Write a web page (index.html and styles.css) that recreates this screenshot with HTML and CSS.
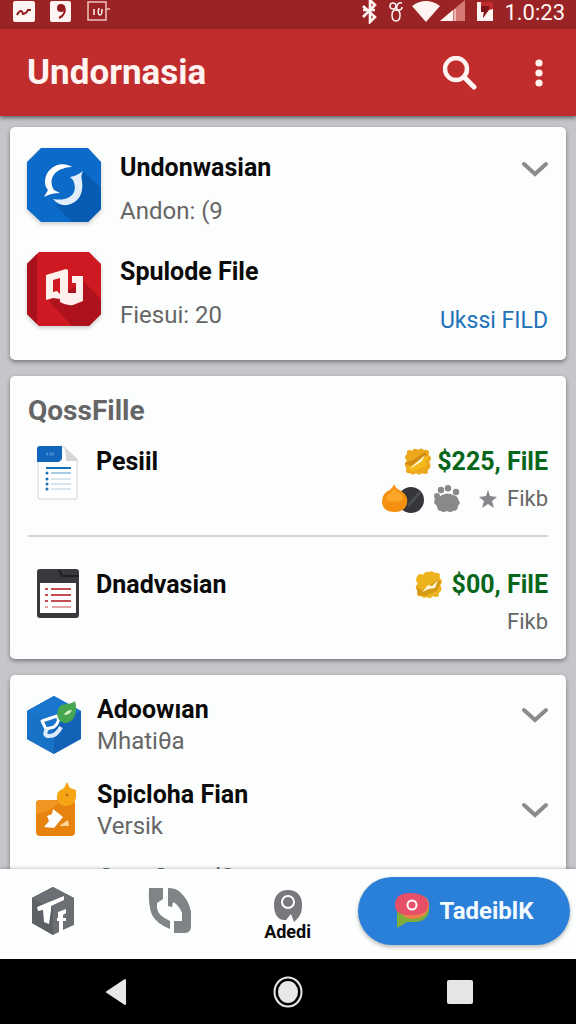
FILE: index.html
```
<!DOCTYPE html>
<html lang="en">
<head>
  <meta charset="UTF-8" />
  <meta name="viewport" content="width=device-width, initial-scale=1.0" />
  <title>Undornasia</title>
  <link rel="stylesheet" href="styles.css">
</head>
<body>
  <div class="status-bar">
    <div class="status-left">
      <svg width="22" height="22" viewBox="0 0 22 22"><rect width="22" height="21" y="1" rx="2" fill="#fff4f1"/><path d="M4 15q2-4 4-4 1 0 2 3 4-1 5-4h3" fill="none" stroke="#8c1c20" stroke-width="2"/></svg>
      <svg width="22" height="22" viewBox="0 0 22 22"><rect width="21" height="21" y="1" rx="2" fill="#fff4f1"/><circle cx="11" cy="8" r="4" fill="#941c20"/><path d="M14 6q3 8-5 12" fill="none" stroke="#941c20" stroke-width="2"/></svg>
      <svg width="24" height="22" viewBox="0 0 24 22"><path d="M19 8V2H1v18h18V9M18 9h5" fill="none" stroke="#f4c4bd" stroke-width="1.500"/><path d="M7 9v6M12 8q-2 7 1 7 2 0 2-6" fill="none" stroke="#fff4f1" stroke-width="1.500"/></svg>
    </div>
    <div class="status-right">
      <svg width="16" height="24" viewBox="0 0 16 24"><path d="M1 6l12 11-5 5V0l5 5L1 17M1 10h12" fill="none" stroke="#fff4f1" stroke-width="2.600"/></svg>
      <svg class="status-link" width="16" height="22" viewBox="0 0 16 22"><g fill="none" stroke="#fff4f1" stroke-width="1.500"><circle cx="5" cy="6" r="3"/><path d="M14 3q-4-1-5 3t2 4q3 0 3-3M8 10q-4 0-4 5 0 6 4 6t4-6q0-5-4-5z"/></g></svg>
      <svg width="28" height="23" viewBox="0 0 28 23"><path d="M0 6Q14-4 28 6L14 22z" fill="#fff4f1"/></svg>
      <svg width="26" height="22" viewBox="0 0 26 22"><path d="M0 21L25 0v21z" fill="#d67874"/><path d="M0 21L13 10v11z" fill="#fff4f1"/><path d="M15 9v12" stroke="#fff4f1"/></svg>
      <svg class="status-battery" width="16" height="22" viewBox="0 0 16 22"><path d="M0 2h16v19H0z" fill="#fff4f1"/><path d="M4 2h12v7l-4 1-6 8 1-6H4z" fill="#c02c2d"/><path d="M4 6h8v3l-6 9 1-6H4z" fill="#7c1518"/></svg>
      <span class="time">1.0:23</span>
    </div>
  </div>

  <header class="app-bar">
    <h1>Undornasia</h1>
    <button class="icon-button" type="button" aria-label="Search">
      <svg width="34" height="34" viewBox="0 0 34 34"><circle cx="13" cy="13" r="11" fill="none" stroke="#fff4f1" stroke-width="4.500"/><path d="M21 21l10 10" stroke="#fff4f1" stroke-width="5" stroke-linecap="round"/></svg>
    </button>
    <button class="icon-button" type="button" aria-label="More options">
      <svg width="8" height="28" viewBox="0 0 8 28"><g fill="#fff4f1"><circle cx="4" cy="4" r="3.600"/><circle cx="4" cy="14" r="3.600"/><circle cx="4" cy="24" r="3.600"/></g></svg>
    </button>
  </header>

  <main class="content">
    <section class="card apps">
      <div class="app-row">
        <svg class="app-icon" width="74" height="74" viewBox="0 0 74 74">
          <path d="M14 0h47l13 14v47L61 74H14L0 61V14z" fill="#0c6bc9"/>
          <path d="M56 23l18 17v21L61 74H45L28 57l22-3z" fill="#075bb2"/>
          <path d="M45 19C37 14 27 16 21 24c-4 6-4 14 0 18l-4 7q7-4 16-4l-6-3C21 32 26 20 45 19z" fill="#fff"/>
          <path d="M56 23c-2 4-2 6-1 10 2 13-4 22-15 24q-8 1-14-6c17 3 26-6 20-19l-3-3q7-1 13-6z" fill="#e2effb"/>
        </svg>
        <div class="app-text">
          <h2>Undonwasian</h2>
          <p>Andon: (9</p>
        </div>
        <button class="expand" type="button" aria-label="Expand">
          <svg width="26" height="16" viewBox="0 0 26 16"><path d="M2 3l11 10L24 3" fill="none" stroke="#8b8b8b" stroke-width="4" stroke-linecap="round"/></svg>
        </button>
      </div>
      <div class="app-row">
        <svg class="app-icon" width="74" height="74" viewBox="0 0 74 74">
          <path d="M12 0h50l12 12v50L62 74H12L0 62V12z" fill="#ce1822"/>
          <path d="M10 2v70L0 62V12z" fill="#aa111c"/>
          <path d="M57 30l17 17v15L62 74H45L22 49z" fill="#ad121d"/>
          <path d="M19 23l20-6 2 1v23h8V31h-4v-7h11v25l-10 4q-7 1-13-3v-3l-7-1-7 2zM26 28v12l4-1 3 3V26z" fill="#fff0ee" fill-rule="evenodd"/>
        </svg>
        <div class="app-text">
          <h2>Spulode File</h2>
          <p>Fiesui: 20</p>
        </div>
        <a class="card-link" href="#">Ukssi FILD</a>
      </div>
    </section>

    <section class="card files">
      <h2 class="card-title">QossFille</h2>
      <div class="file-row">
        <svg class="file-icon" width="42" height="54" viewBox="0 0 42 54">
          <path d="M2 1h25l13 12v38q0 2-2 2H3q-2 0-2-2V3q0-2 1-2z" fill="#fff" stroke="#d2d4d6"/>
          <path d="M27 1l13 12v2H29V10z" fill="#d4d6d8"/>
          <path d="M3 0h22v13l-3 3H0V3q0-3 3-3z" fill="#1265bd"/>
          <path d="M9 8h2M12 8h5" stroke="#4188cf" stroke-width="3"/>
          <path d="M9 22h25" stroke="#1670b8" stroke-width="2"/>
          <path d="M14 27h20" stroke="#4d98cd"/>
          <path d="M14 33h20M14 38h20M14 43h20" stroke="#b9cad7"/>
          <g fill="#1771b9"><circle cx="10" cy="27" r="1.500"/><circle cx="10" cy="33" r="1.500"/><circle cx="10" cy="38" r="1.500"/><circle cx="10" cy="43" r="1.500"/></g>
        </svg>
        <h3>Pesiil</h3>
        <div class="file-info">
          <p class="amount">
            <svg width="28" height="28" viewBox="0 0 28 28"><path d="M3 3q3-2 5 0 2-4 6-1 3-3 6 0 5-1 5 3-1 3 2 4 0 4-2 5 3 4 0 7-2 1-1 4-4 2-6 0-3 3-6 0-4 3-6 0-4 1-4-3 1-3-1-4-1-4 2-5-4-4 0-7z" fill="#eda71a"/><path d="M3 20l5-3L22 7l3 2-3 4q2 4-2 6l-12 5z" fill="#f5b91b"/><path d="M1 15l6 3L23 7l-2-3L9 12z" fill="#d18a12"/><path d="M6 20L21 7l-3 6-9 6z" fill="#fff5ce"/></svg>
            $225, FilE
          </p>
          <p class="badges">
            <svg width="43" height="30" viewBox="0 0 43 30"><circle cx="29" cy="16" r="13" fill="#34363a"/><path d="M26 22l12-14" stroke="#4a4c50" stroke-width="3"/><path d="M12 0q2 5 7 7c5 3 7 7 6 12-1 6-6 9-12 9S1 26 0 19C0 13 2 9 6 7q5-3 6-7z" fill="#f58f0f"/><path d="M12 2q1 5 6 7 4 3 2 7-8 4-16 0 0-5 4-7 4-3 4-7z" fill="#fba529"/></svg>
            <svg width="28" height="28" viewBox="0 0 28 28"><g fill="#88898b"><circle cx="8" cy="5" r="3.200"/><circle cx="15" cy="3.200" r="3.200"/><circle cx="23" cy="7" r="3.200"/><circle cx="4" cy="11" r="3"/><path d="M9 10q6-3 11 0 5 1 5 4l2 4-2 3q0 5-5 5-3 2-6 0-4 2-6 0-4 0-4-5l-3-3 1-5q4 0 7-3z"/></g></svg>
            <svg class="star" width="18" height="18" viewBox="0 0 18 18"><path d="M9 0l2 6 7 1-5 4 2 7-6-4-6 4 2-7-5-4 7-1z" fill="#86878a"/></svg>
            Fikb
          </p>
        </div>
      </div>
      <div class="file-row">
        <svg class="file-icon" width="42" height="50" viewBox="0 0 42 50">
          <rect width="42" height="49" rx="3" fill="#39393d"/>
          <path d="M22 1l3 6h17" fill="none" stroke="#202024" stroke-width="2"/>
          <path d="M3 14h36v30H3z" fill="#fff"/>
          <path d="M14 20h20M14 26h20M14 32h20M8 20h3M8 26h3M8 32h3" stroke="#c44d51" stroke-width="2"/>
          <path d="M15 38h19M8 38h3" stroke="#c44d51"/>
        </svg>
        <h3>Dnadvasian</h3>
        <div class="file-info">
          <p class="amount amount-wide">
            <svg width="28" height="28" viewBox="0 0 28 28"><path d="M3 4q3-2 5 0 2-4 6-3 3-2 6 1 5-1 5 3-1 3 2 4 0 4-2 5 3 4 0 7-2 1-1 4-4 2-6 0-3 4-6 1-4 2-6-1-4 1-4-3 1-3-1-4-1-4 2-5-4-4 0-9z" fill="#edb31d"/><path d="M2 16l5 3 8-5 8-6 3 4-4 8-12 5-7-1z" fill="#d69a19"/><path d="M7 21l6-7 4 1 6-6-3 8-6 1z" fill="#fff5ce"/></svg>
            $00, FilE
          </p>
          <p class="badges">Fikb</p>
        </div>
      </div>
    </section>

    <section class="card more">
      <div class="more-row">
        <svg width="54" height="60" viewBox="0 0 54 60">
          <path d="M27 1l27 15v28L27 59 0 44V16z" fill="#1263b8"/>
          <path d="M27 1v58L0 44V16z" fill="#1872c6"/>
          <path d="M27 1l27 15-27 14L0 16z" fill="#1976cc"/>
          <path d="M15 26l15-5q4 5-3 11l-8 2z" fill="none" stroke="#fff" stroke-width="3" stroke-linejoin="round"/>
          <path d="M20 34q-4 6 1 7 8 1 13-9" fill="none" stroke="#dcecfb" stroke-width="4"/>
          <path d="M48 6c3 12-1 22-10 22-8-1-10-10-5-17 5-3 11-1 15-5z" fill="#46a650"/>
          <path d="M37 20q2-5 8-5-2 5-8 5z" fill="#d8f0c2"/>
        </svg>
        <div class="more-text">
          <h3>Adoowıan</h3>
          <p>Mhatiθa</p>
        </div>
        <button class="expand" type="button" aria-label="Expand">
          <svg width="26" height="16" viewBox="0 0 26 16"><path d="M2 3l11 10L24 3" fill="none" stroke="#8b8b8b" stroke-width="4" stroke-linecap="round"/></svg>
        </button>
      </div>
      <div class="more-row">
        <svg width="54" height="56" viewBox="0 0 54 56">
          <rect x="9" y="18" width="39" height="36" rx="4" fill="#e8820e"/>
          <path d="M9 32V22q0-4 4-4h20q-4 10-24 14z" fill="#f09422"/>
          <path d="M26 27l10 8-9 11-10-1 5-6-2-5 5-2z" fill="#fff"/>
          <path d="M32 44l9-6 1 6z" fill="#ffd499"/>
          <path d="M40 0l3 6 6 2v6c0 6-4 10-10 10-6 0-10-5-9-10 0-5 4-6 7-8z" fill="#f6a615"/>
          <circle cx="40" cy="13" r="1.500" fill="#b87512"/>
        </svg>
        <div class="more-text">
          <h3>Spicloha Fian</h3>
          <p>Versik</p>
        </div>
        <button class="expand" type="button" aria-label="Expand">
          <svg width="26" height="16" viewBox="0 0 26 16"><path d="M2 3l11 10L24 3" fill="none" stroke="#8b8b8b" stroke-width="4" stroke-linecap="round"/></svg>
        </button>
      </div>
      <p class="more-note">Sota Sanatl2</p>
    </section>
  </main>

  <footer class="bottom-bar">
    <nav class="tabs">
      <a href="#" aria-label="Home">
        <svg width="44" height="48" viewBox="0 0 44 48"><path d="M22 0l21 11v27l-9 4-12 6L1 36V11z" fill="#6b6f74"/><path d="M22 0v48L1 36V11z" fill="#5d6064"/><path d="M22 0l21 11-21 11L1 11z" fill="#6b6f73"/><path d="M6 20L33 9v4l-13 6v4l-2 14-5-2-1-12-5 1z" fill="#fff"/><path d="M27 25l8-3v4l-3 2v3h3v3h-3v13l-4 1V34l-2 0v-3h1z" fill="#fff"/></svg>
      </a>
      <a href="#" aria-label="Sync">
        <svg width="44" height="46" viewBox="0 0 44 46"><path d="M1 0h14v11l-6 4v5q1 8 13 13v8Q9 36 4 27 0 17 1 0zM20 0q8 0 12 4 9 8 11 20v14q0 7-6 7H26V33h8v-8q-3-8-9-11l-1 5-4-1z" fill="#818487"/></svg>
      </a>
      <a class="active" href="#">
        <svg width="28" height="32" viewBox="0 0 28 32"><path d="M14 0c9 0 14 6 14 14 0 8-1 12-8 18l-3-8-5 6C4 31 0 24 0 15 0 6 5 0 14 0z" fill="#77797c"/><circle cx="14" cy="12" r="6" fill="none" stroke="#fff" stroke-width="2"/></svg>
        Adedi
      </a>
    </nav>
    <button class="action" type="button">
      <svg width="34" height="36" viewBox="0 0 34 36"><path d="M2 17l32-4c1 11-6 16-14 16h-8L2 35z" fill="#7fae3a"/><path d="M18 1c11 0 17 5 16 12-1 9-9 13-18 13l-8-3z" fill="#ef7d4d"/><path d="M15 0c11 0 18 4 18 12 0 8-7 10-18 10C6 22 0 20 0 12 0 4 5 0 15 0z" fill="#e64f68"/><circle cx="17" cy="12" r="4.500" fill="none" stroke="#fff" stroke-width="2"/></svg>
      TadeiblK
    </button>
  </footer>

  <div class="system-nav">
    <button type="button" aria-label="Back">
      <svg width="22" height="28" viewBox="0 0 22 28"><path d="M2 14L20 2v24z" fill="#e8e8e8" stroke="#e8e8e8" stroke-width="2" stroke-linejoin="round"/></svg>
    </button>
    <button type="button" aria-label="Home">
      <svg width="30" height="32" viewBox="0 0 30 32"><ellipse cx="15" cy="16" rx="13.500" ry="14.500" fill="none" stroke="#e8e8e8" stroke-width="2"/><ellipse cx="15" cy="16" rx="10" ry="11" fill="#e8e8e8"/></svg>
    </button>
    <button type="button" aria-label="Recent apps">
      <svg width="26" height="24" viewBox="0 0 26 24"><rect width="26" height="24" rx="2" fill="#e4e6e7"/></svg>
    </button>
  </div>
</body>
</html>
```
FILE: styles.css
```
/* Basic page styling */
* {
  box-sizing: border-box;
}
body {
  font-family: Roboto, "Liberation Sans", sans-serif;
  margin: 0;
  height: 100vh;
  display: flex;
  flex-direction: column;
  background: #c4c6ca;
  color: #0a0a0a;
  overflow: hidden;
}
h1, h2, h3, p {
  margin: 0;
}
svg {
  display: block;
  flex: none;
}
button {
  font-family: inherit;
  border: none;
  background: none;
  padding: 0;
  cursor: pointer;
}
a {
  text-decoration: none;
}

/* Status bar and header */
.status-bar {
  flex: none;
  display: flex;
  justify-content: space-between;
  height: 29px;
  padding: 0 11px 0 13px;
  background: #992325;
}
.status-left {
  display: flex;
  gap: 15px;
}
.status-right {
  display: flex;
}
.status-link {
  margin: 0 8px 0 10px;
}
.status-battery {
  margin: 0 11px;
}
.time {
  color: #fff4f1;
  font-size: 22px;
  line-height: 26px;
}
.app-bar {
  position: relative;
  flex: none;
  display: flex;
  align-items: center;
  height: 87px;
  padding: 0 33px 0 27px;
  background: #c12d2d;
  box-shadow: 0 2px 4px rgba(0, 0, 0, 0.5);
}
.app-bar h1 {
  flex: 1;
  color: #fff4f1;
  font-size: 35px;
  font-weight: 700;
}
.icon-button + .icon-button {
  margin-left: 58px;
}

/* Cards */
.content {
  flex: 1;
  min-height: 0;
  overflow: hidden;
  display: flex;
  flex-direction: column;
  gap: 16px;
  padding: 11px 10px 0;
}
.card {
  flex: none;
  padding: 20px 18px;
  border-radius: 5px;
  background: #fcfdfd;
  box-shadow: 0 2px 4px rgba(0, 0, 0, 0.4);
}
.card h2,
.card h3 {
  font-size: 25px;
  font-weight: 700;
  line-height: 32px;
}
.card p {
  color: #666;
  font-size: 24px;
  line-height: 32px;
}
.expand {
  flex: none;
}

.apps {
  display: flex;
  flex-direction: column;
  gap: 25px;
  padding: 21px 18px 29px 17px;
}
.app-row {
  display: flex;
  align-items: flex-start;
  gap: 19px;
}
.app-icon {
  filter: drop-shadow(0 2px 2px rgba(0, 0, 0, 0.2));
}
.app-text {
  flex: 1;
  display: flex;
  flex-direction: column;
  gap: 11px;
  padding-top: 4px;
}
.app-row .expand {
  padding-top: 13px;
}
.card-link {
  align-self: flex-end;
  color: #2272b9;
  font-size: 23px;
  line-height: 20px;
}

.files {
  padding: 19px 18px 21px;
}
.files .card-title {
  color: #666;
  font-size: 28px;
}
.file-row {
  display: flex;
  align-items: flex-start;
  padding: 19px 0 20px 9px;
}
.file-row + .file-row {
  border-top: 2px solid #d2d4d6;
  padding: 32px 0 0 9px;
}
.file-row h3 {
  flex: 1;
  margin-left: 17px;
}
.file-info {
  display: flex;
  flex-direction: column;
  align-items: flex-end;
  gap: 5px;
}
.amount,
.badges {
  display: flex;
  align-items: center;
  gap: 8px;
}
.card .badges {
  font-size: 22px;
}
.card .amount {
  gap: 5px;
  color: #08661b;
  font-size: 25px;
  font-weight: 700;
}
.card .amount-wide {
  gap: 9px;
}
.star {
  margin: 0 2px 0 10px;
}

.more {
  display: flex;
  flex-direction: column;
  gap: 23px;
  padding: 19px 18px 19px 17px;
}
.more-row {
  display: flex;
  align-items: center;
  gap: 16px;
}
.more-row:first-child .expand {
  align-self: flex-start;
  padding-top: 13px;
}
.more-text {
  flex: 1;
}
.card .more-text p {
  line-height: 30px;
}
.card .more-note {
  margin-left: 72px;
  line-height: 26px;
}

/* Bottom bar */
.bottom-bar {
  position: relative;
  flex: none;
  display: flex;
  align-items: center;
  height: 90px;
  padding: 0 6px 6px 31px;
  background: #fdfefe;
  box-shadow: 0 -1px 3px rgba(0, 0, 0, 0.2);
}
.tabs {
  flex: 1;
  display: flex;
  align-items: center;
  justify-content: space-between;
  margin-right: 47px;
}
.tabs .active {
  display: flex;
  flex-direction: column;
  align-items: center;
  padding-top: 10px;
  color: #0a0a0a;
  font-size: 18px;
  font-weight: 700;
  line-height: 20px;
}
.action {
  display: flex;
  align-items: center;
  justify-content: center;
  gap: 11px;
  width: 212px;
  height: 68px;
  border-radius: 34px;
  background: #2a7fd9;
  color: #f4fbff;
  font-size: 24px;
  font-weight: 700;
  box-shadow: 0 2px 4px rgba(0, 0, 0, 0.3);
}
.system-nav {
  flex: none;
  display: grid;
  grid-template-columns: repeat(3, 1fr);
  height: 65px;
  padding: 0 30px;
  background: #000;
}
.system-nav button {
  display: flex;
  align-items: center;
  justify-content: center;
}
```
